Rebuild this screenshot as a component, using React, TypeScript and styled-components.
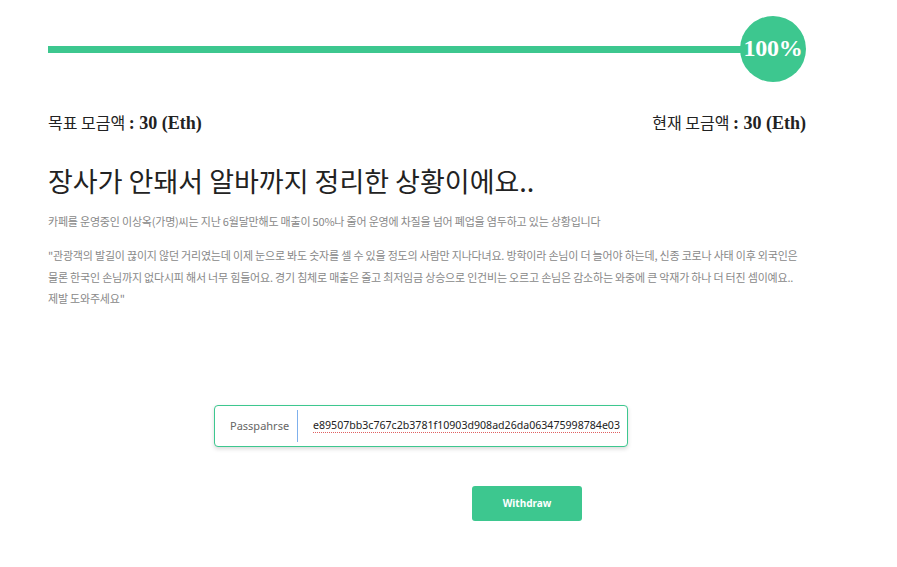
import styled, { createGlobalStyle } from 'styled-components';

const GREEN = '#3dc78f';

const GlobalStyle = createGlobalStyle`
  body {
    margin: 0;
    background: #fff;
    font-family: 'Noto Sans', 'Noto Sans CJK KR', sans-serif;
  }
`;

export default function App() {
  return (
    <>
      <GlobalStyle />
      <Page>
        <ProgressRow>
          <Track />
          <Badge>100%</Badge>
        </ProgressRow>

        <AmountRow>
          <Amount>
            목표 모금액 <Num>: 30 (Eth)</Num>
          </Amount>
          <Amount>
            현재 모금액 <Num>: 30 (Eth)</Num>
          </Amount>
        </AmountRow>

        <Title>장사가 안돼서 알바까지 정리한 상황이에요..</Title>
        <Summary>
          카페를 운영중인 이상옥(가명)씨는 지난 6월달만해도 매출이 50%나 줄어 운영에 차질을 넘어 폐업을 염두하고 있는 상황입니다
        </Summary>
        <Quote>
          "관광객의 발길이 끊이지 않던 거리였는데 이제 눈으로 봐도 숫자를 셀 수 있을 정도의 사람만 지나다녀요. 방학이라 손님이 더
          늘어야 하는데, 신종 코로나 사태 이후 외국인은 물론 한국인 손님까지 없다시피 해서 너무 힘들어요. 경기 침체로 매출은 줄고
          최저임금 상승으로 인건비는 오르고 손님은 감소하는 와중에 큰 악재가 하나 더 터진 셈이예요.. 제발 도와주세요"
        </Quote>

        <Field>
          <FieldLabel>Passpahrse</FieldLabel>
          <FieldValue>
            <Hex>0x7e89507bb3c767c2b3781f10903d908ad26da063475998784e03</Hex>
          </FieldValue>
        </Field>

        <Button>Withdraw</Button>
      </Page>
    </>
  );
}

const Page = styled.div`
  display: flex;
  flex-direction: column;
  width: 758px;
  padding: 15px 0 40px 48px;
`;

const ProgressRow = styled.div`
  display: flex;
  align-items: center;
  height: 67px;
`;

const Track = styled.div`
  flex: 1;
  height: 7px;
  margin-top: 2px;
  background: ${GREEN};
`;

const Badge = styled.div`
  width: 66px;
  height: 66px;
  margin-left: -4px;
  border-radius: 50%;
  background: ${GREEN};
  color: #fff;
  display: flex;
  align-items: center;
  justify-content: center;
  font-family: 'Liberation Serif', 'DejaVu Serif', serif;
  font-weight: 700;
  font-size: 24px;
  letter-spacing: -0.3px;
`;

const AmountRow = styled.div`
  display: flex;
  justify-content: space-between;
  align-items: baseline;
  margin-top: 29px;
`;

const Amount = styled.div`
  font-family: 'Noto Sans CJK KR', sans-serif;
  font-size: 16px;
  color: #222;
  line-height: 22px;
`;

const Num = styled.span`
  font-family: 'Liberation Serif', 'DejaVu Serif', serif;
  font-weight: 700;
  font-size: 18px;
`;

const Title = styled.h1`
  margin: 29px 0 0;
  font-family: 'Noto Sans CJK KR', sans-serif;
  font-weight: 400;
  font-size: 27px;
  line-height: 36px;
  color: #222;
`;

const Text = styled.p`
  font-family: 'Noto Sans CJK KR', sans-serif;
  font-size: 11px;
  letter-spacing: -0.2px;
  word-break: keep-all;
  color: #888;
`;

const Summary = styled(Text)`
  margin: 12px 0 0;
  line-height: 20px;
`;

const Quote = styled(Text)`
  margin: 14px 0 0;
  line-height: 21.5px;
`;

const Field = styled.div`
  display: flex;
  align-items: center;
  width: 412px;
  height: 40px;
  margin: 95px 0 0 166px;
  border: 1px solid ${GREEN};
  border-radius: 4px;
  box-shadow: 0 2px 4px rgba(0, 0, 0, 0.15);
  background: #fff;
`;

const FieldLabel = styled.div`
  flex-shrink: 0;
  padding: 0 8px 0 15px;
  height: 32px;
  display: flex;
  align-items: center;
  border-right: 1px solid #7fb0ec;
  font-size: 11px;
  color: #666;
`;

const FieldValue = styled.div`
  flex: 1;
  min-width: 0;
  display: flex;
  justify-content: flex-end;
  overflow: hidden;
  margin: 0 7px 0 15px;
  padding-bottom: 2px;
`;

const Hex = styled.span`
  flex-shrink: 0;
  white-space: nowrap;
  font-size: 10.6px;
  line-height: 18px;
  color: #222;
  text-decoration: underline dotted #e06060;
  text-decoration-thickness: 1px;
  text-underline-offset: 3px;
`;

const Button = styled.button`
  width: 110px;
  height: 35px;
  margin: 39px 0 0 424px;
  border: none;
  border-radius: 3px;
  background: ${GREEN};
  color: #fff;
  font-family: 'Noto Sans', sans-serif;
  font-weight: 700;
  font-size: 10px;
`;
